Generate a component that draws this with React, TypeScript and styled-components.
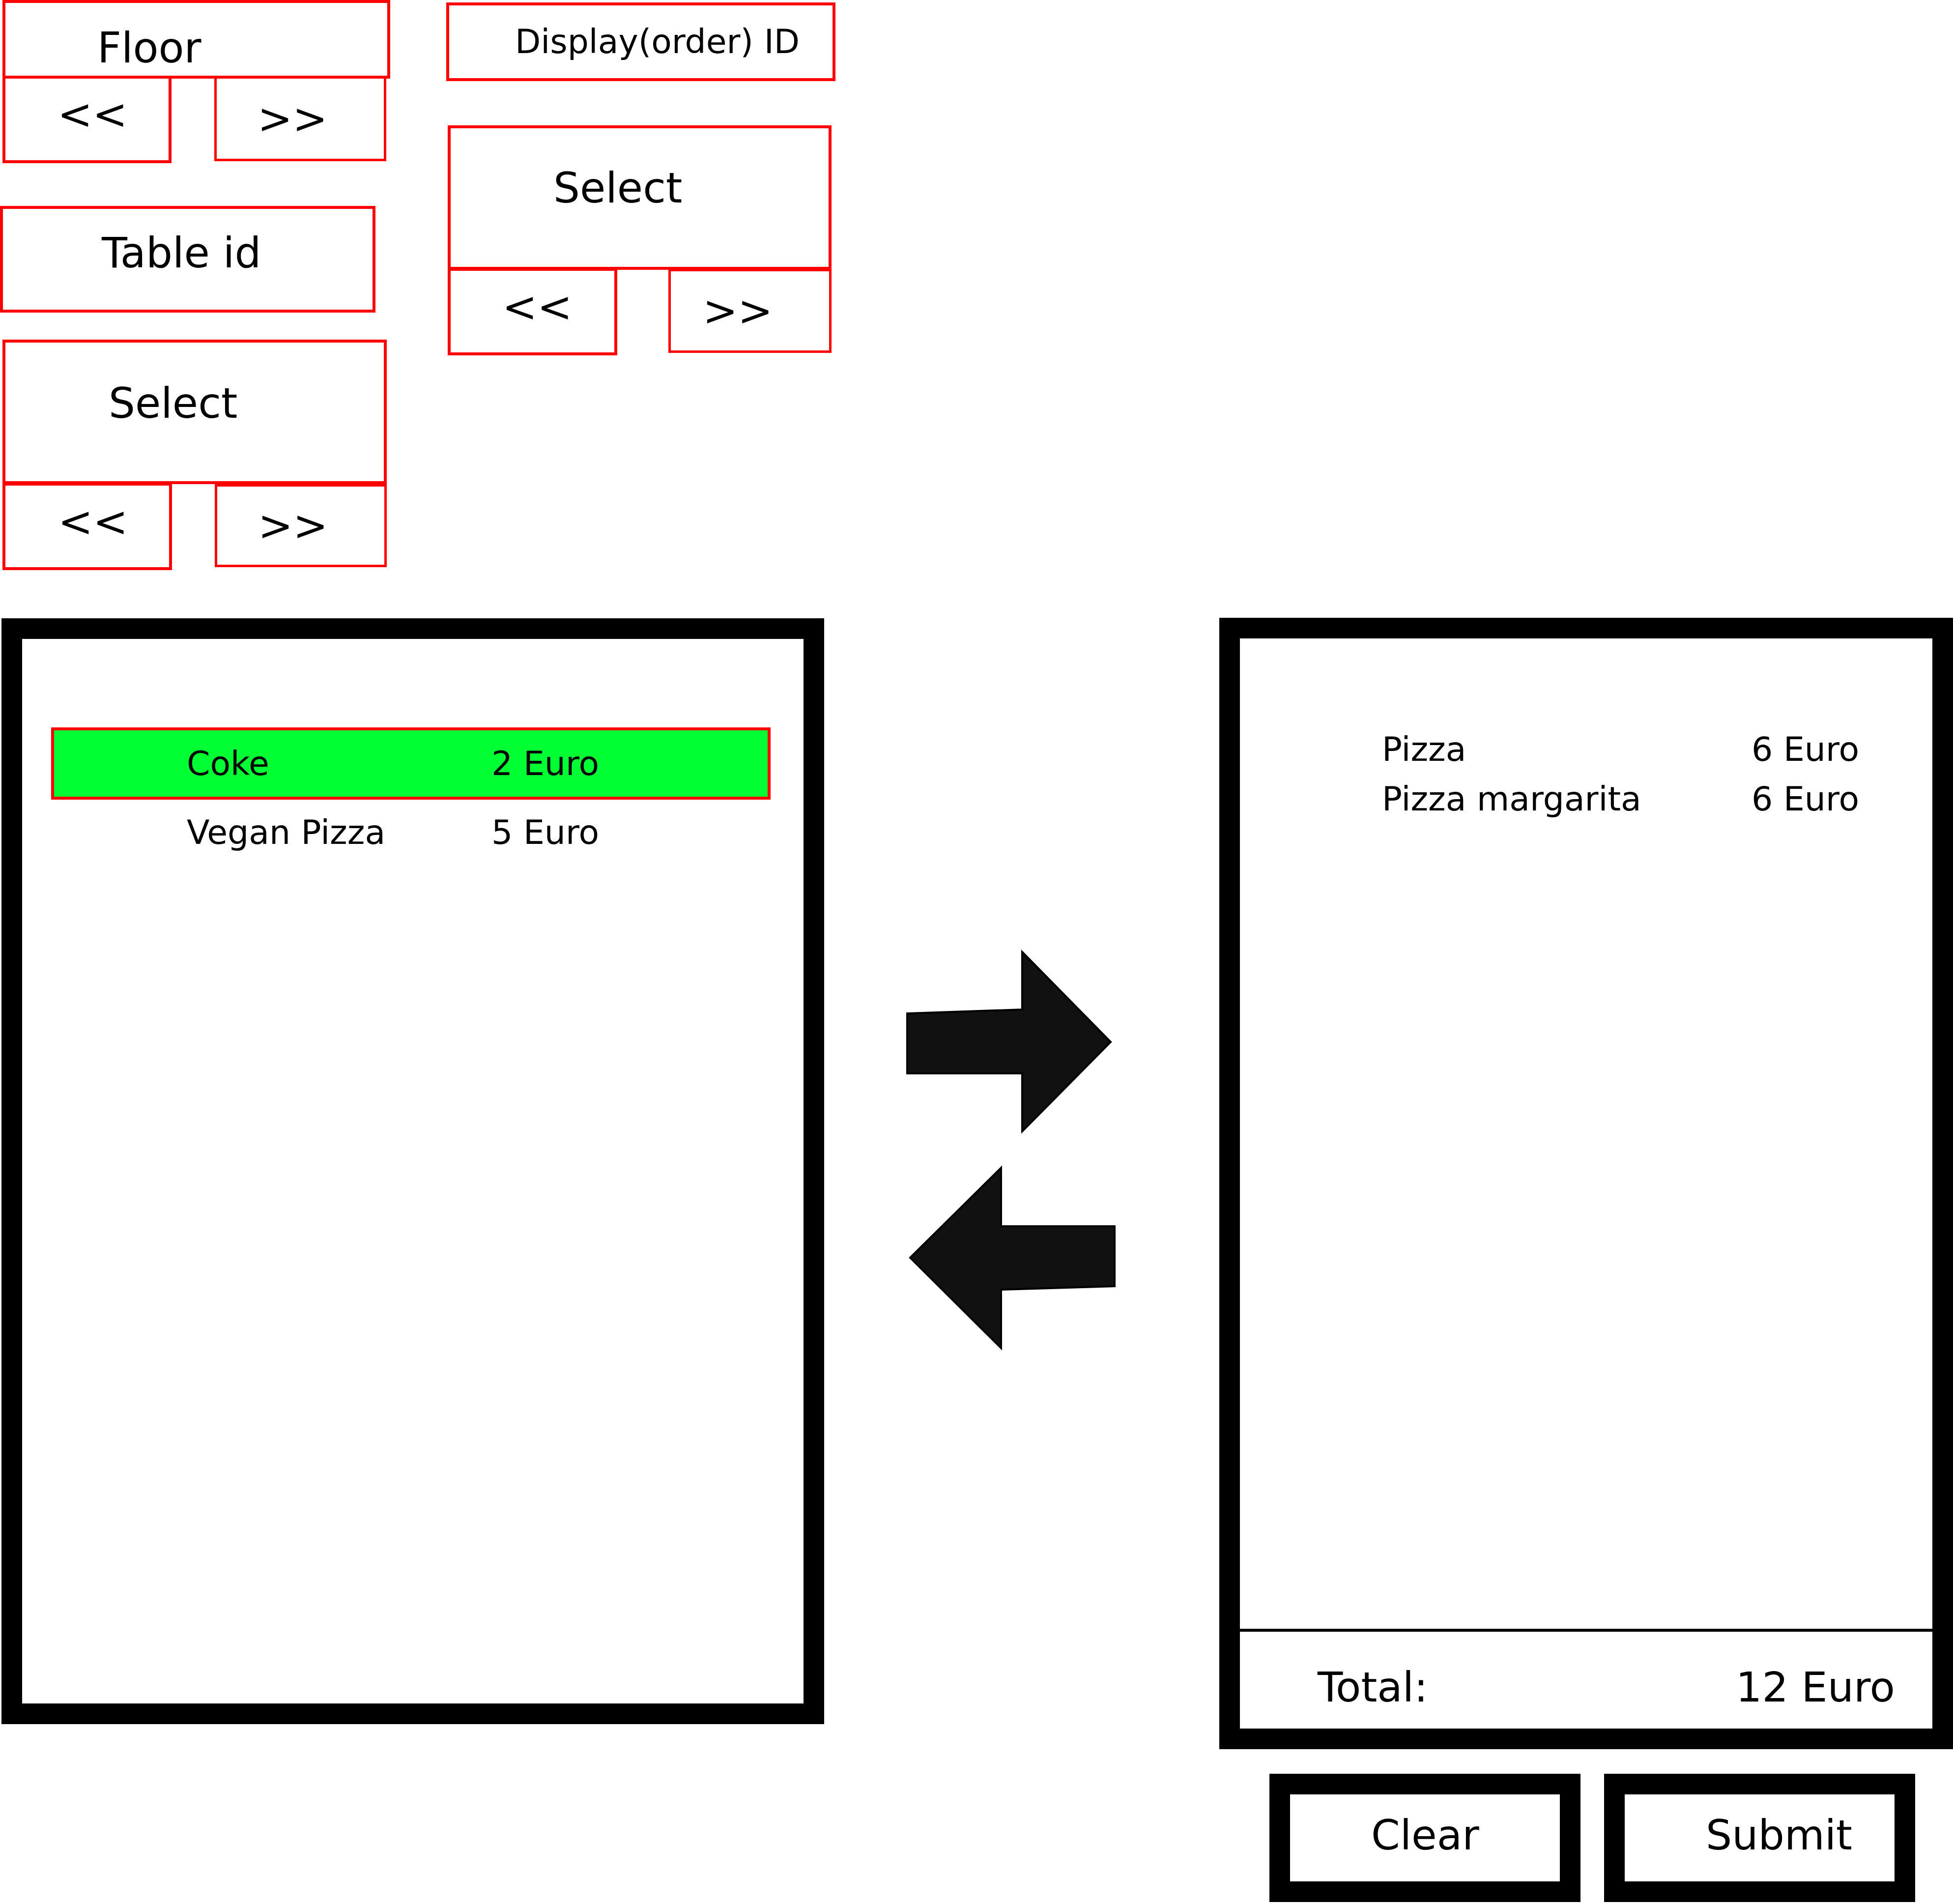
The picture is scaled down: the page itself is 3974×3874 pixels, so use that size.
import React from 'react';
import styled, { createGlobalStyle } from 'styled-components';

const GlobalStyle = createGlobalStyle`
  html, body {
    margin: 0;
    padding: 0;
    background: #ffffff;
    overflow: hidden;
  }
  body {
    font-family: "DejaVu Sans", "Liberation Sans", sans-serif;
    color: #000000;
  }
  * {
    box-sizing: border-box;
  }
`;

const Page = styled.div`
  width: 3974px;
  height: 3874px;
  display: flex;
  flex-direction: column;
`;

// top area: floor / table / display pickers
const Header = styled.div`
  display: flex;
  align-items: flex-start;
  gap: 114px;
`;

const ControlColumn = styled.div<{ $w: number }>`
  display: flex;
  flex-direction: column;
  align-items: flex-start;
  width: ${(p) => p.$w}px;
  flex-shrink: 0;
`;

type BoxProps = {
  $w: number;
  $h: number;
  $pt: number;
  $pl: number;
  $bw?: number;
  $mt?: number;
  $ml?: number;
  $fs?: number;
};

const LabelBox = styled.div<BoxProps>`
  width: ${(p) => p.$w}px;
  height: ${(p) => p.$h}px;
  margin: ${(p) => p.$mt ?? 0}px 0 0 ${(p) => p.$ml ?? 0}px;
  border: ${(p) => p.$bw ?? 6}px solid #ff0000;
  padding: ${(p) => p.$pt}px 0 0 ${(p) => p.$pl}px;
  font-size: ${(p) => p.$fs ?? 85}px;
  line-height: 1;
  white-space: nowrap;
  flex-shrink: 0;
`;

const NavRow = styled.div<{ $mt: number; $ml?: number }>`
  display: flex;
  align-items: flex-start;
  margin: ${(p) => p.$mt}px 0 0 ${(p) => p.$ml ?? 0}px;
`;

const NavButton = styled(LabelBox)`
  font-size: 85px;
`;

// bottom area: menu, transfer arrows, order
const Workspace = styled.div`
  display: flex;
  align-items: flex-start;
  margin-top: 98px;
`;

const MenuPanel = styled.div`
  margin-left: 3px;
  width: 1674px;
  height: 2250px;
  border: 42px solid #000000;
  padding: 180px 0 0 59px;
  display: flex;
  flex-direction: column;
  align-items: flex-start;
  flex-shrink: 0;
`;

const ItemRow = styled.div<{ $selected?: boolean }>`
  display: grid;
  grid-template-columns: 620px auto;
  width: 1464px;
  height: ${(p) => (p.$selected ? '147px' : 'auto')};
  border: 6px solid ${(p) => (p.$selected ? '#ff0000' : 'transparent')};
  background: ${(p) => (p.$selected ? '#00ff33' : 'transparent')};
  margin-top: ${(p) => (p.$selected ? 0 : -6)}px;
  padding: ${(p) => (p.$selected ? 34 : 33)}px 0 0 270px;
  font-size: 68px;
  line-height: 1;
  white-space: nowrap;
`;

const ArrowArea = styled.div`
  width: 804px;
  padding: 670px 0 0 163px;
  flex-shrink: 0;
`;

const OrderColumn = styled.div`
  display: flex;
  flex-direction: column;
  margin-top: -1px;
  flex-shrink: 0;
`;

const OrderPanel = styled.div`
  width: 1493px;
  height: 2302px;
  border: 42px solid #000000;
  display: flex;
  flex-direction: column;
`;

const OrderList = styled.div`
  flex: 1;
  padding: 175px 0 0 289px;
`;

const OrderLine = styled.div`
  display: grid;
  grid-template-columns: 752px auto;
  font-size: 68px;
  line-height: 101px;
  white-space: nowrap;
`;

const TotalBar = styled.div`
  height: 203px;
  border-top: 6px solid #000000;
  display: flex;
  justify-content: space-between;
  align-items: flex-start;
  padding: 71px 76px 0 158px;
  font-size: 84px;
  line-height: 1;
  white-space: nowrap;
`;

const ActionRow = styled.div`
  display: flex;
  gap: 48px;
  margin: 50px 0 0 102px;
`;

const ActionButton = styled.div`
  width: 633px;
  height: 261px;
  border: 42px solid #000000;
  padding: 41px 0 0 165px;
  font-size: 84px;
  line-height: 1;
  white-space: nowrap;
`;

const TransferArrows = () => (
  <svg width="435" height="824" viewBox="0 0 435 824">
    <polygon
      points="6,134 240,126 240,9 420,192 240,374 240,256 6,256"
      fill="#111111"
      stroke="#000000"
      strokeWidth="4"
    />
    <polygon
      points="12,631 197,448 197,567 428,567 428,689 197,696 197,815"
      fill="#111111"
      stroke="#000000"
      strokeWidth="4"
    />
  </svg>
);

const menu = [
  { name: 'Coke', price: '2 Euro', selected: true },
  { name: 'Vegan Pizza', price: '5 Euro', selected: false },
];

const order = [
  { name: 'Pizza', price: '6 Euro' },
  { name: 'Pizza margarita', price: '6 Euro' },
];

export default function App() {
  return (
    <>
      <GlobalStyle />
      <Page>
        <Header>
          <ControlColumn $w={794}>
            <LabelBox $w={789} $h={160} $ml={5} $pt={49} $pl={187}>
              Floor
            </LabelBox>
            <NavRow $mt={-6} $ml={5}>
              <NavButton $w={344} $h={178} $pt={30} $pl={106}>
                &lt;&lt;
              </NavButton>
              <NavButton $w={350} $h={173} $bw={5} $ml={87} $mt={1} $pt={39} $pl={83}>
                &gt;&gt;
              </NavButton>
            </NavRow>
            <LabelBox $w={764} $h={217} $mt={87} $pt={47} $pl={201}>
              Table id
            </LabelBox>
            <LabelBox $w={782} $h={294} $mt={55} $ml={5} $pt={81} $pl={210}>
              Select
            </LabelBox>
            <NavRow $mt={-3} $ml={5}>
              <NavButton $w={345} $h={178} $pt={31} $pl={107}>
                &lt;&lt;
              </NavButton>
              <NavButton $w={350} $h={169} $bw={5} $ml={87} $mt={3} $pt={37} $pl={83}>
                &gt;&gt;
              </NavButton>
            </NavRow>
          </ControlColumn>

          <ControlColumn $w={792}>
            <LabelBox $w={792} $h={160} $mt={5} $pt={40} $pl={134} $fs={68}>
              Display(order) ID
            </LabelBox>
            <LabelBox $w={781} $h={294} $mt={90} $ml={3} $pt={79} $pl={209}>
              Select
            </LabelBox>
            <NavRow $mt={-4} $ml={3}>
              <NavButton $w={345} $h={178} $pt={31} $pl={105}>
                &lt;&lt;
              </NavButton>
              <NavButton $w={332} $h={171} $bw={5} $ml={104} $mt={2} $pt={38} $pl={65}>
                &gt;&gt;
              </NavButton>
            </NavRow>
          </ControlColumn>
        </Header>

        <Workspace>
          <MenuPanel>
            {menu.map((item) => (
              <ItemRow key={item.name} $selected={item.selected}>
                <span>{item.name}</span>
                <span>{item.price}</span>
              </ItemRow>
            ))}
          </MenuPanel>

          <ArrowArea>
            <TransferArrows />
          </ArrowArea>

          <OrderColumn>
            <OrderPanel>
              <OrderList>
                {order.map((line) => (
                  <OrderLine key={line.name}>
                    <span>{line.name}</span>
                    <span>{line.price}</span>
                  </OrderLine>
                ))}
              </OrderList>
              <TotalBar>
                <span>Total:</span>
                <span>12 Euro</span>
              </TotalBar>
            </OrderPanel>
            <ActionRow>
              <ActionButton>Clear</ActionButton>
              <ActionButton>Submit</ActionButton>
            </ActionRow>
          </OrderColumn>
        </Workspace>
      </Page>
    </>
  );
}
